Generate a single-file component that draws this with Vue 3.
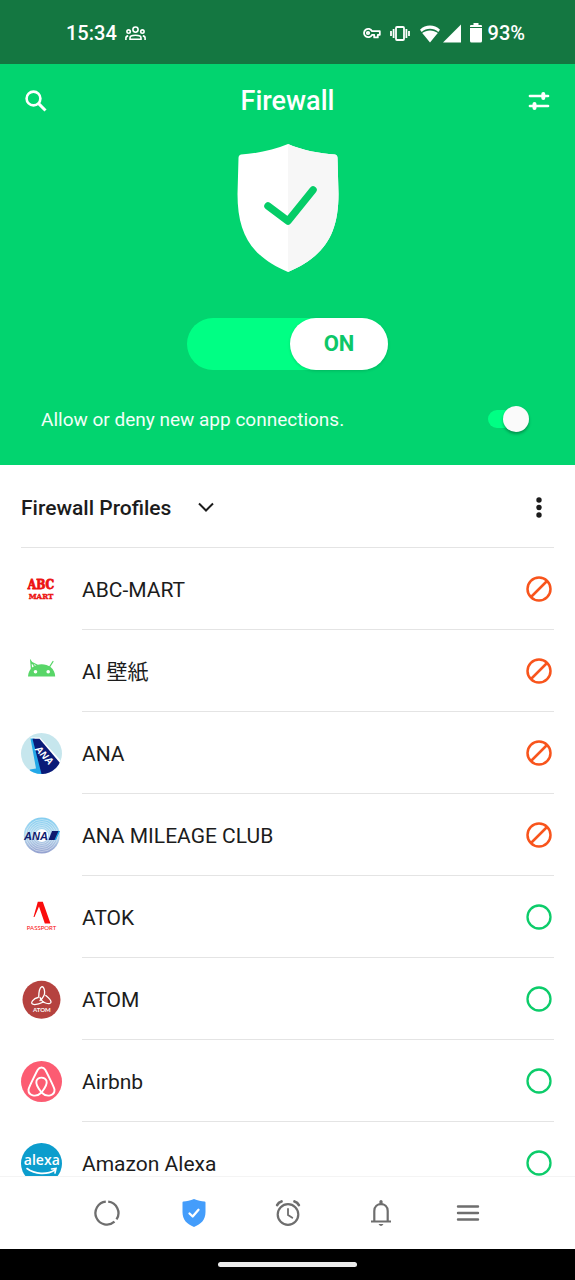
<template>
  <div class="screen">
    <header class="status-bar">
      <div class="status-group">
        <span class="clock">15:34</span>
        <svg class="icon-people" viewBox="0 0 21 15" fill="none" stroke="#fff" stroke-width="1.6">
          <circle cx="10.500" cy="3.600" r="2.600" />
          <circle cx="3.600" cy="5.600" r="1.700" />
          <circle cx="17.400" cy="5.600" r="1.700" />
          <path d="M5 13.200v-1.500c0-3.200 11-3.200 11 0v1.500zM.9 14v-2c0-1.100.8-1.900 2.300-2.100M20.100 14v-2c0-1.100-.8-1.900-2.300-2.100" />
        </svg>
      </div>
      <div class="status-group">
        <svg class="icon-key" viewBox="0 0 18 12" fill="none" stroke="#fff" stroke-width="1.8">
          <path d="M9 4.200A4.200 4.200 0 1 0 9 7.800h2.200v2.600h3.600V7.800h2V4.200z" stroke-linejoin="round" />
          <circle cx="5" cy="6" r="1.200" />
        </svg>
        <svg class="icon-vibrate" viewBox="0 0 20 15" fill="none" stroke="#fff" stroke-width="1.800">
          <rect x="6" y="1" width="8" height="13" rx="1" />
          <path d="M3.600 3v9M1 5v5M16.400 3v9M19 5v5" />
        </svg>
        <svg class="icon-wifi" viewBox="0 0 22 19" fill="#fff">
          <path d="M11 18.500 3.200 9c4.400-3.500 11.200-3.500 15.600 0z" />
          <path d="M1 5.800C6.500.2 15.500.2 21 5.800L19.300 8C14.500 3.800 7.500 3.800 2.700 8z" />
        </svg>
        <svg class="icon-signal" viewBox="0 0 18 19" fill="#fff"><path d="M18 .5v18H0z" /></svg>
        <svg class="icon-battery" viewBox="0 0 12 20" fill="#fff">
          <path d="M3.500 0h5v2H11q1 0 1 1v1H0V3q0-1 1-1h2.500zM0 5h12v13q0 1.500-1.500 1.500h-9Q0 19.500 0 18z" />
        </svg>
        <span class="clock">93%</span>
      </div>
    </header>

    <section class="hero">
      <div class="toolbar">
        <button class="icon-button" aria-label="Search">
          <svg class="icon-search" viewBox="0 0 22 22" fill="none" stroke="#fff" stroke-width="2.6">
            <circle cx="8.500" cy="8.500" r="6.900" />
            <path d="M13.400 13.400 20.500 20.500" stroke-width="3" />
          </svg>
        </button>
        <h1>Firewall</h1>
        <button class="icon-button" aria-label="Filters">
          <svg class="icon-tune" viewBox="0 0 22 18" fill="none" stroke="#fff" stroke-width="2.700" stroke-linecap="round">
            <path d="M2 4h18M2 14h18" />
            <path d="M15.300 2v4M6.500 12v4" stroke-width="4" />
          </svg>
        </button>
      </div>

      <svg class="shield" viewBox="0 0 102 128">
        <path d="M51 0C37 6 20 9.500 4 10.500Q1.500 11 1.500 14L.5 50C.5 92 16 113 51 128 86 113 101.500 92 101.500 50L100.500 14Q100.500 11 98 10.500C82 9.500 65 6 51 0z" fill="#fff" />
        <path d="M51 0V128C86 113 101.500 92 101.500 50L100.500 14Q100.500 11 98 10.500C82 9.500 65 6 51 0z" fill="#f7f7f7" />
        <path d="M31 62 51 77 76 46" fill="none" stroke="#05cd68" stroke-width="7.500" stroke-linecap="round" stroke-linejoin="round" />
      </svg>

      <label class="master">
        <input v-model="firewallOn" type="checkbox" aria-label="Firewall">
        <span class="master-knob">{{ firewallOn ? 'ON' : 'OFF' }}</span>
      </label>

      <label class="new-apps">
        <span>Allow or deny new app connections.</span>
        <input v-model="askNewApps" type="checkbox" class="switch">
      </label>
    </section>

    <main class="list">
      <div class="profiles">
        <div class="profile-picker">
          <select v-model="profile" aria-label="Profile">
            <option>Firewall Profiles</option>
          </select>
          <svg viewBox="0 0 16 10" fill="none" stroke="#1c1c1c" stroke-width="2"><path d="M1 1.500 8 8.500 15 1.500" /></svg>
        </div>
        <button class="more" aria-label="More options">
          <svg viewBox="0 0 6 21" fill="#1c1c1c">
            <circle cx="3" cy="3" r="2.700" /><circle cx="3" cy="10.500" r="2.700" /><circle cx="3" cy="18" r="2.700" />
          </svg>
        </button>
      </div>

      <ul>
        <li v-for="app in apps" :key="app.id" class="app-row">
          <svg class="logo" viewBox="0 0 41 41">
            <g v-if="app.id === 'abc'" class="logo-abc" fill="#ec1313" stroke="#ec1313" text-anchor="middle">
              <text x="20" y="20" font-size="12" stroke-width=".8">ABC</text>
              <text x="20" y="30" font-size="8" stroke-width=".4">MART</text>
            </g>
            <g v-else-if="app.id === 'wallpaper'">
              <path d="M7 25.500C7.500 9 33.700 9 34.200 25.500z" fill="#58d668" />
              <path d="M14 16 9.800 10 10.500 18M10 11 16 14M28.500 16 32 10.500" fill="none" stroke="#58d668" stroke-width="1.300" stroke-linecap="round" />
              <circle cx="14.500" cy="20.800" r="1.800" fill="#fff" /><circle cx="27.200" cy="20.800" r="1.800" fill="#fff" />
            </g>
            <g v-else-if="app.id === 'ana'">
              <clipPath id="ana-disc"><circle cx="20.500" cy="20.500" r="20.500" /></clipPath>
              <g clip-path="url(#ana-disc)">
                <path d="M0 0h41v41H0z" fill="#c6e6ed" />
                <path d="M9.500 4.500H19L40 28v13H22z" fill="#fff" />
                <path d="M9.500 5.500h4L23 41H6l3-4.500 6-1z" fill="#23a8e8" />
                <path d="M11.500 5.800h7L39 30 33 41H20.500z" fill="#0a1a78" />
                <text class="logo-ana" transform="translate(13.500 16.500) rotate(48)" font-size="10" fill="#fff">ANA</text>
              </g>
            </g>
            <g v-else-if="app.id === 'mileage'">
              <linearGradient id="mileage-ring" x2="0" y2="1">
                <stop offset="0" stop-color="#83cdf0" /><stop offset=".5" stop-color="#b8dcf0" /><stop offset="1" stop-color="#939fce" />
              </linearGradient>
              <circle cx="20.800" cy="20.500" r="18" fill="url(#mileage-ring)" />
              <g fill="none" stroke="#fff" stroke-width=".6" opacity=".7">
                <circle v-for="r in [8, 10, 12, 14, 16]" :key="r" cx="20.800" cy="20.500" :r="r" />
              </g>
              <circle cx="20.800" cy="20.500" r="6.500" fill="#fff" />
              <text class="logo-ana" x="3" y="25" font-size="11" fill="#101b6e">ANA</text>
              <path d="M31 16h7.500L34.500 25h-7z" fill="#101b6e" />
              <path d="M37.500 16h1.500L35 25h-1.500z" fill="#23a8e8" />
            </g>
            <g v-else-if="app.id === 'atok'" fill="#fa0d0d">
              <path d="M16.800 4.800h5l7.700 21.700h-5.700L18 9.500 13.500 20h-1z" />
              <text class="logo-thin" x="20.500" y="33" font-size="6" text-anchor="middle">PASSPORT</text>
            </g>
            <g v-else-if="app.id === 'atom'">
              <circle cx="20.500" cy="20.800" r="19" fill="#b5423f" />
              <g fill="none" stroke="#fff" stroke-width="1.300" stroke-linecap="round" stroke-linejoin="round">
                <path d="M17.700 18C18 5.500 23 5.500 23.600 12.500 24 16 22.500 18.500 19 21.500" />
                <path d="M24.800 16.500C33 23 30.500 26 24.500 24 21.500 23 20 21 19 18.500" />
                <path d="M22.500 23C14 27 8.500 26 11.500 21.800 13 19.800 15 18.800 17 18.500" />
              </g>
              <text class="logo-word" x="20.800" y="33" font-size="6" fill="#fff" text-anchor="middle">ATOM</text>
            </g>
            <g v-else-if="app.id === 'airbnb'">
              <circle cx="20.500" cy="20.500" r="20.500" fill="#fc5c72" />
              <path d="M20.500 31.500C16 26 14.500 23 15.500 19.800 17 15.500 24 15.500 25.500 19.800 26.500 23 25 26 20.500 31.500 15 37 7 34.500 7.500 28.500 8 26 15 12 16.800 8.800 18.500 5.800 22.500 5.800 24.200 8.800 26 12 33 26 33.500 28.500 34 34.500 26 37 20.500 31.500z" fill="none" stroke="#fff" stroke-width="1.900" stroke-linejoin="round" />
            </g>
            <g v-else-if="app.id === 'alexa'">
              <circle cx="20.500" cy="20.500" r="20.500" fill="#0c9dcd" />
              <text class="logo-alexa" x="20.800" y="22" font-size="14" fill="#fff" text-anchor="middle">alexa</text>
              <path d="M6 25.500C14 31.500 26 32 34 27M30.500 26l4.500-.5-1 4.500" fill="none" stroke="#fff" stroke-width="1.600" stroke-linecap="round" />
            </g>
          </svg>
          <div class="app-body">
            <span class="app-name">{{ app.name }}</span>
            <button
              class="rule"
              :aria-label="(app.blocked ? 'Allow ' : 'Block ') + app.name"
              @click="app.blocked = !app.blocked"
            >
              <svg v-if="app.blocked" viewBox="0 0 26 26" fill="none" stroke="#f8541c" stroke-width="2.500">
                <circle cx="13" cy="13" r="11.500" /><path d="M5 21 21 5" />
              </svg>
              <svg v-else viewBox="0 0 26 26" fill="none" stroke="#0ccc6a" stroke-width="2.300">
                <circle cx="13" cy="13" r="11.500" />
              </svg>
            </button>
          </div>
        </li>
      </ul>
    </main>

    <nav class="tabs">
      <button class="tab edge" aria-label="Usage">
        <svg viewBox="0 0 28 28" fill="none" stroke="#6e6e6e" stroke-width="2.300">
          <path d="M12.800 2.600A11.500 11.500 0 1 0 21.500 22.700M23.500 20.400A11.500 11.500 0 0 0 15.200 2.600" />
        </svg>
      </button>
      <button class="tab" aria-label="Firewall">
        <svg viewBox="0 0 28 28">
          <path d="M14 0C10.500 1.500 6.500 2.300 3.500 2.500Q2.500 2.600 2.500 3.600V13C2.500 21 7 25 14 28 21 25 25.500 21 25.500 13V3.600Q25.500 2.600 24.500 2.500C21.500 2.300 17.500 1.500 14 0z" fill="#449dfb" />
          <path d="M9.500 14.500 12.700 17.500 18.500 10.800" fill="none" stroke="#fff" stroke-width="2.300" stroke-linecap="round" stroke-linejoin="round" />
        </svg>
      </button>
      <button class="tab" aria-label="Schedule">
        <svg viewBox="0 0 28 28" fill="none" stroke="#6e6e6e" stroke-width="2.200" stroke-linecap="round">
          <circle cx="14" cy="15.500" r="10.300" />
          <path d="M14 9.800v6.200l4.300 2.800" stroke-width="1.800" />
          <path d="M3.200 6Q4.500 3.300 7.500 2.500M24.800 6Q23.500 3.300 20.500 2.500" stroke-width="2.800" />
        </svg>
      </button>
      <button class="tab" aria-label="Alerts">
        <svg viewBox="0 0 28 28" fill="none" stroke="#6e6e6e" stroke-width="2.200">
          <path d="M4 22.500h20M7.300 22V12c0-9.200 13.400-9.200 13.400 0v10" />
          <path d="M14 2.500v2" stroke-width="3.200" stroke-linecap="round" />
          <path d="M11.500 25h5q-2.500 4-5 0z" fill="#6e6e6e" stroke="none" />
        </svg>
      </button>
      <button class="tab edge" aria-label="Menu">
        <svg viewBox="0 0 28 28" fill="none" stroke="#6e6e6e" stroke-width="2.400" stroke-linecap="round">
          <path d="M4 7.500h20M4 14h20M4 20.500h20" />
        </svg>
      </button>
    </nav>
    <div class="gesture-bar"><span></span></div>
  </div>
</template>

<script setup>
import { ref } from 'vue';

const firewallOn = ref(true);
const askNewApps = ref(true);
const profile = ref('Firewall Profiles');

const apps = ref([
  { id: 'abc', name: 'ABC-MART', blocked: true },
  { id: 'wallpaper', name: 'AI 壁紙', blocked: true },
  { id: 'ana', name: 'ANA', blocked: true },
  { id: 'mileage', name: 'ANA MILEAGE CLUB', blocked: true },
  { id: 'atok', name: 'ATOK', blocked: false },
  { id: 'atom', name: 'ATOM', blocked: false },
  { id: 'airbnb', name: 'Airbnb', blocked: false },
  { id: 'alexa', name: 'Amazon Alexa', blocked: false },
]);
</script>

<style>
body { background: #fff; }
</style>

<style scoped>
.screen {
  display: flex;
  flex-direction: column;
  height: 100vh;
  color: #1c1c1c;
  font-family: Roboto, "Noto Sans CJK JP", sans-serif;
  font-size: 21px;
  line-height: 28px;
}

svg { display: block; flex: none; }

button {
  display: flex;
  align-items: center;
  justify-content: center;
  padding: 0;
  border: 0;
  background: none;
  cursor: pointer;
}

.status-bar {
  display: flex;
  justify-content: space-between;
  align-items: center;
  flex: none;
  height: 64px;
  padding: 2px 50px 0 66px;
  box-sizing: border-box;
  background: #147741;
  color: #fff;
}
.status-group { display: flex; align-items: center; }
.clock { font-size: 20px; font-weight: 500; }
.icon-people { width: 21px; height: 15px; margin-left: 8px; }
.icon-key { width: 18px; height: 12px; }
.icon-vibrate { width: 20px; height: 15px; margin-left: 9px; }
.icon-wifi { width: 22px; height: 19px; margin-left: 9px; }
.icon-signal { width: 18px; height: 19px; margin-left: 2px; }
.icon-battery { width: 12px; height: 20px; margin: 0 6px 0 9px; }

.hero {
  display: flex;
  flex-direction: column;
  align-items: center;
  flex: none;
  padding-bottom: 26px;
  background: #02d46f;
  color: #fff;
}
.toolbar {
  display: flex;
  align-items: center;
  justify-content: space-between;
  align-self: stretch;
  height: 74px;
  padding: 0 15px;
}
.toolbar h1 { margin: 0; font-size: 27px; font-weight: 500; }
.icon-button { width: 42px; height: 42px; }
.icon-search { width: 22px; height: 22px; }
.icon-tune { width: 22px; height: 18px; }
.shield { width: 102px; height: 128px; margin-top: 6px; }

.master {
  display: flex;
  width: 201px;
  height: 52px;
  margin-top: 46px;
  border-radius: 26px;
  background: #00ff84;
  cursor: pointer;
}
.master input { position: absolute; opacity: 0; }
.master-knob {
  width: 98px;
  border-radius: 26px;
  background: #fff;
  box-shadow: 0 1px 3px rgba(0, 0, 0, 0.15);
  color: #0dc768;
  font-size: 22px;
  font-weight: 700;
  line-height: 52px;
  text-align: center;
}
.master input:checked + .master-knob { margin-left: auto; }

.new-apps {
  display: flex;
  align-items: center;
  justify-content: space-between;
  align-self: stretch;
  height: 40px;
  margin-top: 29px;
  padding: 0 46px 0 41px;
  color: #f2fff8;
  font-size: 19px;
}
.new-apps span { padding-top: 2px; }
.switch {
  display: flex;
  align-items: center;
  width: 41px;
  height: 18px;
  margin: 0;
  border-radius: 9px;
  background: #00ff84;
  appearance: none;
}
.switch::before {
  content: "";
  width: 26px;
  height: 26px;
  border-radius: 50%;
  background: #fafafa;
  box-shadow: 0 2px 3px rgba(0, 0, 0, 0.3);
}
.switch:checked::before { margin-left: auto; }

.list {
  flex: 1;
  min-height: 0;
  padding: 0 21px;
  overflow: hidden;
}
.profiles {
  display: flex;
  align-items: center;
  justify-content: space-between;
  height: 82px;
  padding: 2px 2px 0 0;
  box-sizing: border-box;
}
.profile-picker { position: relative; }
.profile-picker select {
  padding: 2px 42px 0 0;
  border: 0;
  background: none;
  color: inherit;
  font: inherit;
  font-weight: 500;
  appearance: none;
}
.profile-picker svg {
  position: absolute;
  top: 10px;
  right: 0;
  width: 16px;
  height: 10px;
  pointer-events: none;
}
.more { width: 26px; height: 42px; }
.more svg { width: 6px; height: 21px; }

ul {
  margin: 0;
  padding: 0;
  border-top: 1px solid #e4e4e4;
  list-style: none;
}
.app-row { display: flex; align-items: center; gap: 20px; height: 82px; }
.logo { width: 41px; height: 41px; }
.app-body {
  display: flex;
  align-items: center;
  justify-content: space-between;
  flex: 1;
  height: 82px;
  padding-right: 2px;
  border-bottom: 1px solid #e4e4e4;
  box-sizing: border-box;
}
.app-name { padding-top: 2px; }
.rule, .rule svg { width: 26px; height: 26px; }

.logo-abc { font-family: "DejaVu Serif Condensed", "DejaVu Serif", serif; font-weight: 700; }
.logo-ana { font-family: "Liberation Sans", sans-serif; font-weight: 700; font-style: italic; }
.logo-thin { font-family: Lato, sans-serif; }
.logo-word { font-family: Lato, sans-serif; font-weight: 700; }
.logo-alexa { font-family: "Open Sans", sans-serif; font-weight: 600; }

.tabs {
  display: flex;
  align-items: center;
  justify-content: space-between;
  flex: none;
  height: 72px;
  padding: 0 93px;
  background: #fff;
  box-shadow: 0 -1px 0 #f4f4f4;
}
.tab { width: 40px; height: 40px; }
.tab.edge { width: 28px; }
.tab svg { width: 28px; height: 28px; }

.gesture-bar {
  display: flex;
  align-items: center;
  justify-content: center;
  flex: none;
  height: 31px;
  background: #000;
}
.gesture-bar span { width: 139px; height: 5px; border-radius: 3px; background: #ececec; }
</style>
